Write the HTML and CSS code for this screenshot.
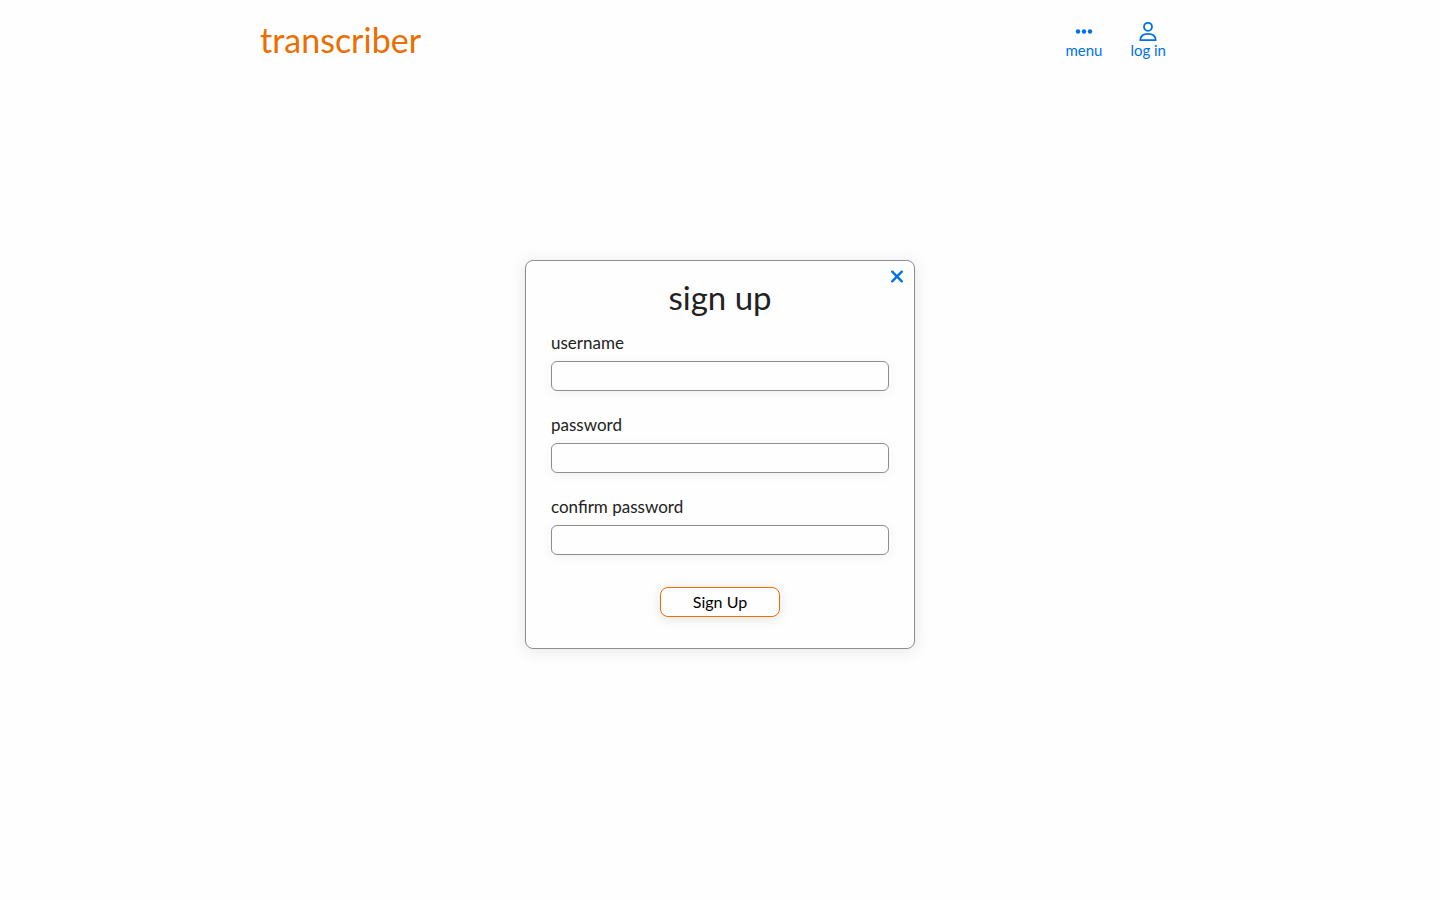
FILE: index.html
```html
<!DOCTYPE html>
<html lang="en">
<head>
<meta charset="utf-8">
<meta name="viewport" content="width=device-width, initial-scale=1">
<title>transcriber</title>
<link rel="stylesheet" href="styles.css">
</head>
<body>
<header class="header">
  <a class="brand" href="#">transcriber</a>
  <nav class="nav">
    <button class="nav-item" type="button">
      <svg class="nav-icon" viewBox="0 0 20 20" fill="currentColor" aria-hidden="true"><circle cx="4" cy="10.5" r="2.2"/><circle cx="10" cy="10.5" r="2.2"/><circle cx="16" cy="10.5" r="2.2"/></svg>
      <span>menu</span>
    </button>
    <a class="nav-item" href="#">
      <svg class="nav-icon" viewBox="0 0 20 20" fill="none" stroke="currentColor" stroke-width="1.8" stroke-linejoin="round" aria-hidden="true"><circle cx="10" cy="5.8" r="4"/><path d="M2.3 19.1C2.1 15.2 5.3 12.8 10 12.8S17.9 15.2 17.7 19.1Z"/></svg>
      <span>log in</span>
    </a>
  </nav>
</header>
<main class="main">
  <form class="card">
    <button class="close" type="button" aria-label="Close">
      <svg class="close-icon" viewBox="0 0 14 14" fill="none" stroke="currentColor" stroke-width="2.4" stroke-linecap="round" aria-hidden="true"><path d="M2.2 2.7 11.8 12.3M11.8 2.7 2.2 12.3"/></svg>
    </button>
    <h1 class="title">sign up</h1>
    <div class="field">
      <label class="label" for="username">username</label>
      <input class="input" id="username" type="text">
    </div>
    <div class="field">
      <label class="label" for="password">password</label>
      <input class="input" id="password" type="password">
    </div>
    <div class="field">
      <label class="label" for="confirm">confirm password</label>
      <input class="input" id="confirm" type="password">
    </div>
    <button class="submit" type="submit">Sign Up</button>
  </form>
</main>
</body>
</html>
```
FILE: styles.css
```css
* {
  box-sizing: border-box;
}

body {
  margin: 0;
  background: #fefefe;
  color: #222;
  font-family: Lato, "Open Sans", sans-serif;
  font-size: 16px;
  line-height: 20px;
}

button,
input {
  font: inherit;
}

.header {
  display: flex;
  align-items: center;
  justify-content: space-between;
  max-width: 920px;
  margin: 0 auto;
  padding: 20px 0;
}

.brand {
  color: #eb6e00;
  font-size: 34px;
  line-height: 40px;
  text-decoration: none;
}

.nav {
  display: flex;
}

.nav-item {
  display: flex;
  flex-direction: column;
  align-items: center;
  padding: 0 14px;
  border: 0;
  background: none;
  color: #0070e8;
  font-size: 15px;
  line-height: 18px;
  text-decoration: none;
  cursor: pointer;
}

.nav-icon {
  width: 20px;
  height: 20px;
}

.main {
  display: flex;
  justify-content: center;
  padding: 180px 16px 40px;
}

.card {
  position: relative;
  display: flex;
  flex-direction: column;
  gap: 22px;
  width: 100%;
  max-width: 390px;
  padding: 16px 25px 31px;
  border: 1px solid #8e8e8e;
  border-radius: 8px;
  background: #fefefe;
  box-shadow: 0 2px 16px rgba(0, 0, 0, 0.1);
}

.close {
  position: absolute;
  top: 8px;
  right: 10px;
  display: flex;
  padding: 0;
  border: 0;
  background: none;
  color: #0070e8;
  cursor: pointer;
}

.close-icon {
  width: 14px;
  height: 14px;
}

.title {
  margin: 0 0 -6px;
  font-size: 33px;
  font-weight: 400;
  line-height: 40px;
  text-align: center;
}

.field {
  display: flex;
  flex-direction: column;
  gap: 8px;
  padding-bottom: 2px;
}

.label {
  font-size: 17px;
  line-height: 20px;
}

.input {
  width: 100%;
  height: 30px;
  padding: 0 8px;
  border: 1px solid #8e8e8e;
  border-radius: 6px;
  background: #fefefe;
  box-shadow: 0 2px 12px rgba(0, 0, 0, 0.06);
}

.submit {
  align-self: center;
  width: 120px;
  height: 30px;
  margin-top: 8px;
  padding: 0;
  border: 1px solid #eb6e00;
  border-radius: 8px;
  background: #fefefe;
  color: #000;
  box-shadow: 0 2px 12px rgba(0, 0, 0, 0.12);
  cursor: pointer;
}
```
